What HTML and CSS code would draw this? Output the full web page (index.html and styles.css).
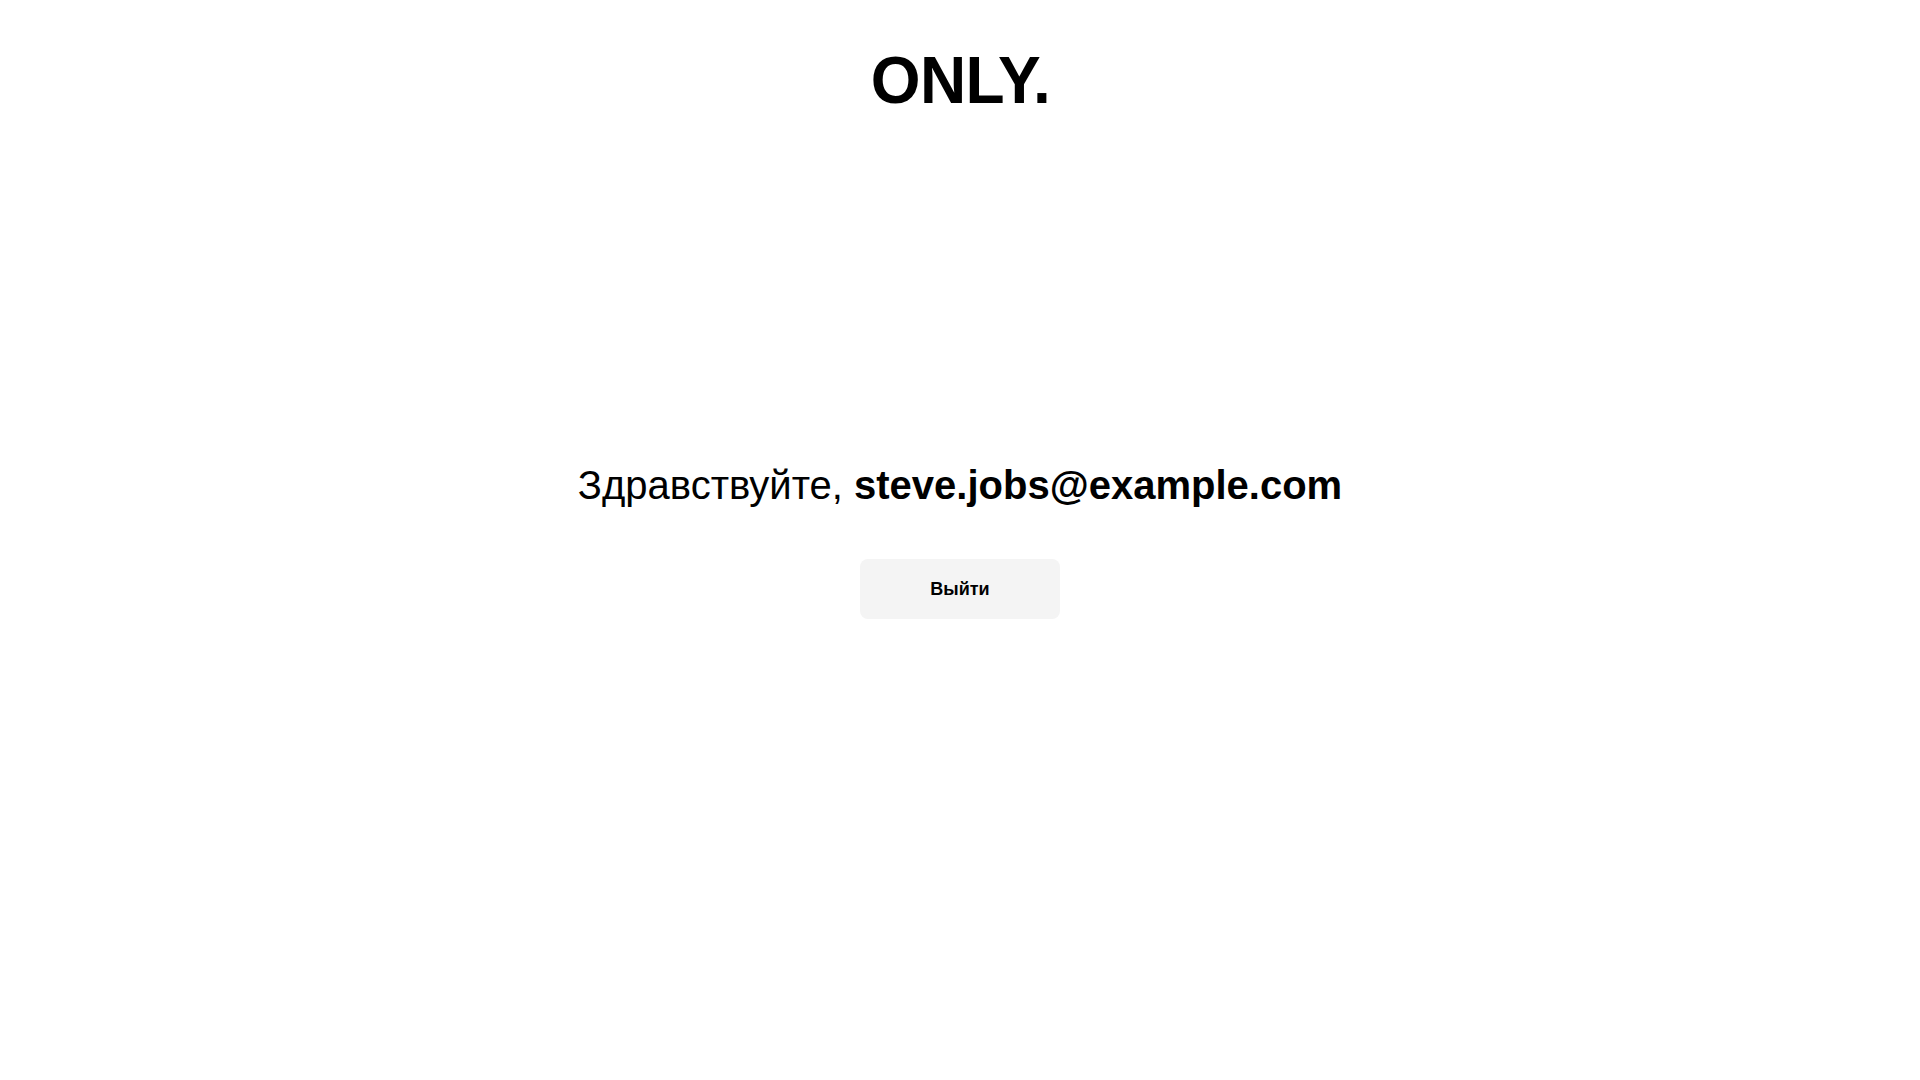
FILE: index.html
```html
<!DOCTYPE html>
<html lang="ru">
<head>
<meta charset="utf-8">
<title>ONLY.</title>
<link rel="stylesheet" href="styles.css">
</head>
<body>
<div class="page">
  <header class="header">
    <div class="logo">ONLY.</div>
  </header>
  <main class="main">
    <p class="greeting">Здравствуйте, <strong>steve.jobs@example.com</strong></p>
    <button class="logout" type="button">Выйти</button>
  </main>
</div>
</body>
</html>
```
FILE: styles.css
```css
* { box-sizing: border-box; }
html, body { margin: 0; padding: 0; background: #fff; }
body {
  font-family: "Liberation Sans", Arial, sans-serif;
  color: #000;
}
.page {
  min-height: 100vh;
  display: grid;
  grid-template-rows: 1fr auto 1fr;
}
.header {
  display: flex;
  justify-content: center;
  align-items: flex-start;
  padding-top: 47px;
}
.logo {
  font-size: 66px;
  line-height: 1;
  font-weight: 700;
  letter-spacing: -0.01em;
  transform: scaleX(0.97);
  transform-origin: center;
}
.main {
  display: flex;
  flex-direction: column;
  align-items: center;
}
.greeting {
  margin: 0;
  font-size: 40px;
  line-height: 48px;
  font-weight: 400;
}
.greeting strong { font-weight: 700; }
.logout {
  margin-top: 50px;
  width: 200px;
  height: 60px;
  border: none;
  border-radius: 8px;
  background: #f4f4f4;
  font-family: "Liberation Sans", Arial, sans-serif;
  font-size: 18px;
  font-weight: 700;
  color: #000;
  cursor: pointer;
  padding-top: 2px;
}
```
